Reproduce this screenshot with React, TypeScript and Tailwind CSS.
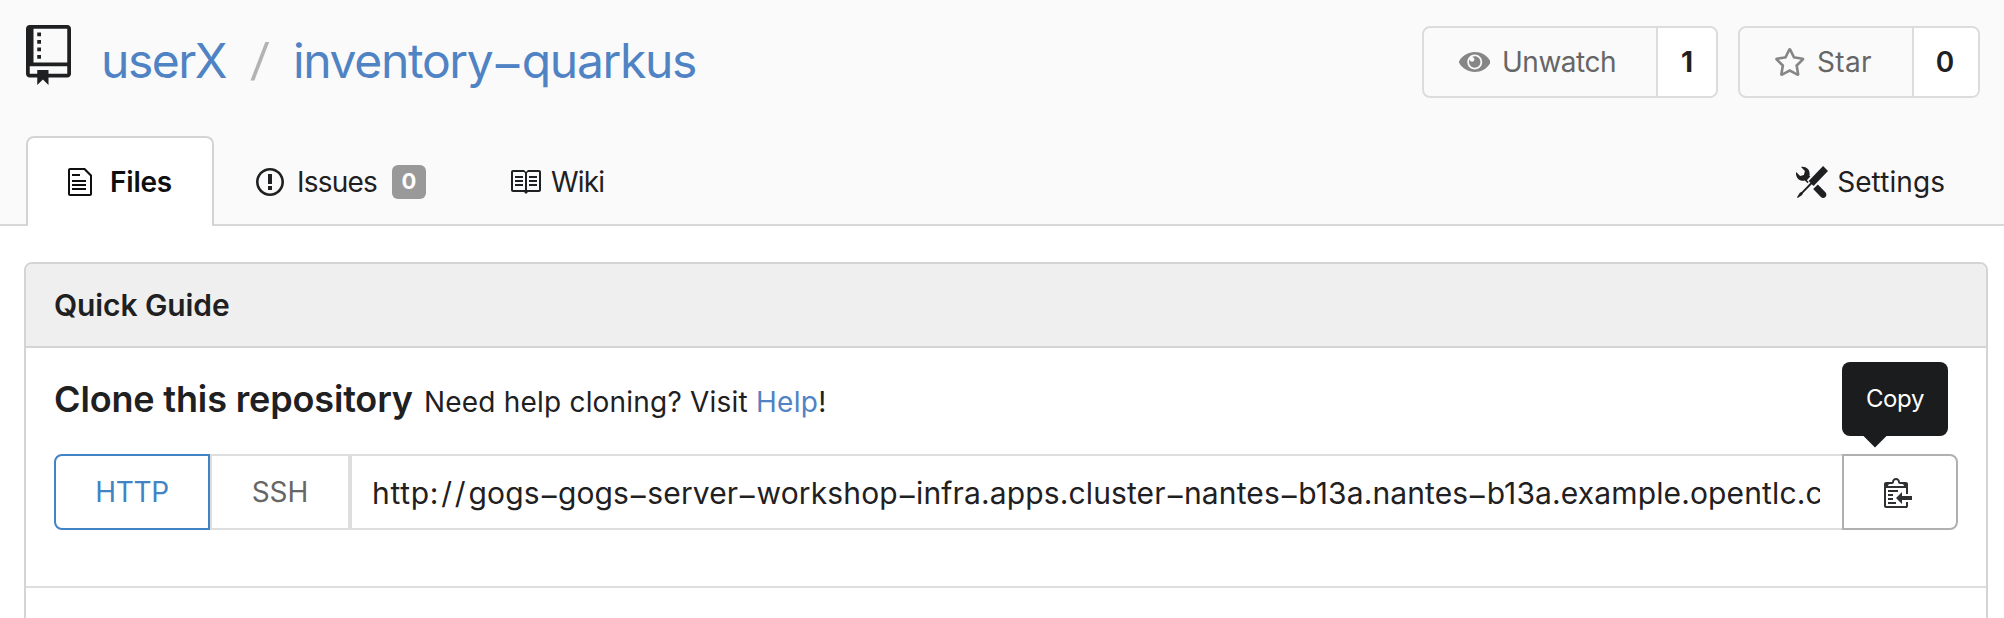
import React, { Fragment } from "react";

type IconProps = { className?: string; viewBox: string; d: string };

function Icon({ className = "", viewBox, d }: IconProps) {
  return (
    <svg className={`block shrink-0 fill-current ${className}`} viewBox={viewBox} aria-hidden="true">
      <path fillRule="evenodd" d={d} />
    </svg>
  );
}

const icons = {
  repo: "M4 9H3V8h1v1zm0-3H3v1h1V6zm0-2H3v1h1V4zm0-2H3v1h1V2zm8-1v12c0 .55-.45 1-1 1H6v2l-1.5-1.5L3 16v-2H1c-.55 0-1-.45-1-1V1c0-.55.45-1 1-1h10c.55 0 1 .45 1 1zm-1 10H1v2h2v-1h3v1h5v-2zm0-10H2v9h9V1z",
  file: "M6 5H2V4h4v1zM2 8h7V7H2v1zm0 2h7V9H2v1zm0 2h7v-1H2v1zm10-7.5V14c0 .55-.45 1-1 1H1c-.55 0-1-.45-1-1V2c0-.55.45-1 1-1h7.5L12 4.5zM11 5L8 2H1v12h10V5z",
  issue: "M7 2.3c3.14 0 5.7 2.56 5.7 5.7s-2.56 5.7-5.7 5.7A5.71 5.71 0 0 1 1.3 8c0-3.14 2.56-5.7 5.7-5.7zM7 1C3.14 1 0 4.14 0 8s3.14 7 7 7 7-3.14 7-7-3.14-7-7-7zm1 3H6v5h2V4zm0 6H6v2h2v-2z",
  book: "M3 5h4v1H3V5zm0 3h4V7H3v1zm0 2h4V9H3v1zm11-5h-4v1h4V5zm0 2h-4v1h4V7zm0 2h-4v1h4V9zm2-6v9c0 .55-.45 1-1 1H9.5l-1 1-1-1H2c-.55 0-1-.45-1-1V3c0-.55.45-1 1-1h5.5l1 1 1-1H15c.55 0 1 .45 1 1zm-8 .5L7.5 3H2v9h6V3.5zm7-.5H9.5l-.5.5V12h6V3z",
  tools: "M4.48 7.27c.26.26 1.28 1.33 1.28 1.33l.56-.58-.88-.91 1.69-1.8s-.76-.74-.43-.45c.32-1.19.03-2.51-.87-3.44C4.93.5 3.66.2 2.52.51l1.93 2-.51 1.96-1.89.52-1.93-1.99C-.19 4.13.1 5.45 1 6.37c.94.98 2.29 1.26 3.48.9zm6.44 1.94l-2.33 2.3 3.84 3.98c.31.33.73.49 1.14.49.41 0 .82-.16 1.14-.49.63-.65.63-1.7 0-2.35l-3.79-3.93zM16 2.53L13.55 0 6.33 7.46l.88.91-4.31 4.46-.99.53-1.39 2.27.35.37 2.2-1.44.51-1.02L7.9 9.08l.88.91L16 2.53z",
  clippy: "M2 13h4v1H2v-1zm5-6H2v1h5V7zm2 3V8l-3 3 3 3v-2h5v-2H9zM4.5 9H2v1h2.5V9zM2 12h2.5v-1H2v1zm9 1h1v2c-.02.28-.11.52-.3.7-.19.18-.42.28-.7.3H1c-.55 0-1-.45-1-1V4c0-.55.45-1 1-1h3c0-1.11.89-2 2-2s2 .89 2 2h3c.55 0 1 .45 1 1v5h-1V6H1v9h10v-2zM2 5h8c0-.55-.45-1-1-1H8c-.55 0-1-.45-1-1s-.45-1-1-1-1 .45-1 1-.45 1-1 1H3c-.55 0-1 .45-1 1z",
  eye: "M569.354 231.631C512.97 135.949 407.81 72 288 72 168.14 72 63.004 135.994 6.646 231.631a47.999 47.999 0 0 0 0 48.739C63.031 376.051 168.19 440 288 440c119.86 0 224.996-63.994 281.354-159.631a47.997 47.997 0 0 0 0-48.738zM288 392c-75.162 0-136-60.827-136-136 0-75.162 60.826-136 136-136 75.162 0 136 60.826 136 136 0 75.162-60.826 136-136 136zm104-136c0 57.438-46.562 104-104 104s-104-46.562-104-104c0-17.708 4.431-34.379 12.236-48.973l-.001.032c0 23.651 19.173 42.823 42.824 42.823s42.824-19.173 42.824-42.823c0-23.651-19.173-42.824-42.824-42.824l-.032.001C253.621 156.431 270.292 152 288 152c57.438 0 104 46.562 104 104z",
  star: "M528.1 171.5L382 150.2 316.7 17.8c-11.7-23.6-45.6-23.9-57.4 0L194 150.2 47.9 171.5c-26.2 3.8-36.7 36.1-17.7 54.6l105.7 103-25 145.5c-4.5 26.3 23.2 46 46.4 33.7L288 439.6l130.7 68.7c23.2 12.2 50.9-7.4 46.4-33.7l-25-145.5 105.7-103c19-18.5 8.5-50.8-17.7-54.6zM388.6 312.3l23.7 138.4L288 385.4l-124.3 65.3 23.7-138.4-100.6-98 139-20.2 62.2-126 62.2 126 139 20.2-100.6 98z",
};

/** Text whose hyphens are drawn wide, as long dashes. */
function Dashed({ children }: { children: string }) {
  return (
    <>
      {children.split("-").map((part, i) => (
        <Fragment key={i}>
          {i > 0 && <span className="inline-block w-[0.61em] translate-y-[0.07em] scale-x-[1.55] text-center tracking-normal">-</span>}
          {part}
        </Fragment>
      ))}
    </>
  );
}

function Header() {
  return (
    <header className="flex h-[136px] items-start bg-[#fafafa]">
      <Icon className="mt-[25px] ml-[26px] h-[60px] w-[45px]" viewBox="0 0 12 16" d={icons.repo} />
      <h1 className="mt-[31px] ml-[30px] flex text-5xl leading-[60px] whitespace-nowrap text-[#4f83c4]">
        <a className="w-[149px] tracking-[-1.5px]">userX</a>
        <span className="w-[43px] font-['Roboto',sans-serif] text-[50px] text-[#b3b3b3]">/</span>
        <a className="tracking-[-1.33px]"><Dashed>inventory-quarkus</Dashed></a>
      </h1>
      <div className="mt-[26px] mr-6 ml-auto flex gap-5 text-[28px] text-[#666]">
        <div className="flex h-[72px] w-[296px] items-center overflow-hidden rounded-lg border-2 border-[#dcdcdc]">
          <Icon className="ml-[34.5px] h-7 w-[31.5px] text-[#868686]" viewBox="0 0 576 512" d={icons.eye} />
          <span className="ml-3 tracking-[-0.48px]">Unwatch</span>
          <span className="ml-auto flex h-full w-[60px] items-center justify-center border-l-2 border-[#dcdcdc] bg-white font-bold text-[#1f2021]">1</span>
        </div>
        <div className="flex h-[72px] w-[242px] items-center overflow-hidden rounded-lg border-2 border-[#dcdcdc]">
          <Icon className="ml-[33.5px] h-7 w-[31.5px] text-[#868686]" viewBox="0 0 576 512" d={icons.star} />
          <span className="ml-[12px] tracking-[0.34px]">Star</span>
          <span className="ml-auto flex h-full w-[66px] items-center justify-center border-l-2 border-[#dcdcdc] bg-white pr-0.5 font-semibold text-[#1f2021]">0</span>
        </div>
      </div>
    </header>
  );
}

function Tabs() {
  return (
    <nav className="flex h-[90px] bg-[#fafafa] text-[28px]">
      <span className="w-[26px] border-b-2 border-[#d8d8d9]" />
      <a className="flex w-[188px] items-center rounded-t-lg border-2 border-b-0 border-[#d4d4d5] bg-white pl-10 font-semibold tracking-[-0.2px] text-[#0f0f10]">
        <Icon className="h-8 w-6" viewBox="0 0 12 16" d={icons.file} />
        <span className="ml-[18px]">Files</span>
      </a>
      <div className="flex flex-1 items-center border-b-2 border-[#d8d8d9] pt-[3px] pr-[59px] pl-[42px]">
        <Icon className="h-8 w-7" viewBox="0 0 14 16" d={icons.issue} />
        <span className="ml-[13px] tracking-[-0.79px]">Issues</span>
        <span className="ml-[15px] flex h-[34px] w-[34px] items-center justify-center rounded-md bg-[#999] pb-px text-[22px] font-bold text-white">0</span>
        <Icon className="ml-[83px] size-8" viewBox="0 0 16 16" d={icons.book} />
        <span className="ml-[10px] tracking-[-0.8px]">Wiki</span>
        <Icon className="ml-auto size-8" viewBox="0 0 16 16" d={icons.tools} />
        <span className="ml-[9px] tracking-[0.08px]">Settings</span>
      </div>
    </nav>
  );
}

function Tooltip({ text }: { text: string }) {
  return (
    <div className="absolute bottom-[92px] -left-0.5 flex h-[74px] w-[106px] items-center justify-center rounded-lg bg-[#1b1c1d] text-2xl tracking-[-0.38px] text-white">
      <span className="absolute -bottom-[11.5px] left-[21px] h-6 w-6 bg-[#1b1c1d] [clip-path:polygon(0_50%,100%_50%,50%_100%)]" />
      {text}
    </div>
  );
}

function CloneBar() {
  return (
    <div className="flex h-[76px] w-[1904px] text-[28px] text-[#666]">
      <button className="w-[156px] rounded-l-lg border-2 border-[#4183c4] text-center tracking-[-0.3px] text-[#4183c4]">HTTP</button>
      <button className="w-[140px] border-2 border-[#dedede] text-center">SSH</button>
      <div className="w-[1492px] border-2 border-r-0 border-[#dedede] pr-[22px] pl-[20px] text-[30px] leading-[74px] tracking-[0.13px] text-[#1f2021]">
        <div className="overflow-hidden whitespace-nowrap">
          <span className="tracking-[0.7px]">http</span>
          <span className="tracking-[2.8px]">://</span>
          <Dashed>gogs-gogs-server-workshop-infra.apps.cluster-nantes-b13a.nantes-b13a.example.opentlc.com</Dashed>
        </div>
      </div>
      <div className="relative flex w-[116px] items-center justify-center rounded-r-lg border-2 border-[#b0b0b1] text-[#2f3032]">
        <Icon className="h-8 w-7 -translate-x-0.5" viewBox="0 0 14 16" d={icons.clippy} />
        <Tooltip text="Copy" />
      </div>
    </div>
  );
}

export default function App() {
  return (
    <div className="h-[618px] w-[2004px] overflow-hidden bg-white font-['Inter',sans-serif] text-[#1f2021]">
      <Header />
      <Tabs />
      <section className="mt-9 ml-6 h-[400px] w-[1964px] rounded-t-lg border-2 border-[#d4d4d5]">
        <h2 className="flex h-[84px] items-center rounded-t-md border-b-2 border-[#d4d4d5] bg-[#efefef] pl-7 text-[30px] font-semibold tracking-[-0.1px]">Quick Guide</h2>
        <div className="h-[240px] border-b-2 border-[#dedede] pl-7">
          <div className="flex h-[106px] items-baseline pt-[29px] text-[28px] whitespace-nowrap">
            <h3 className="w-[370px] text-4xl leading-[44px] font-semibold tracking-[-0.15px]">Clone this repository</h3>
            <span className="leading-[44px] tracking-[0.2px]">Need help cloning? Visit&nbsp;</span>
            <a className="tracking-[0.3px] text-[#4f83c4]">Help</a>!
          </div>
          <CloneBar />
        </div>
      </section>
    </div>
  );
}
